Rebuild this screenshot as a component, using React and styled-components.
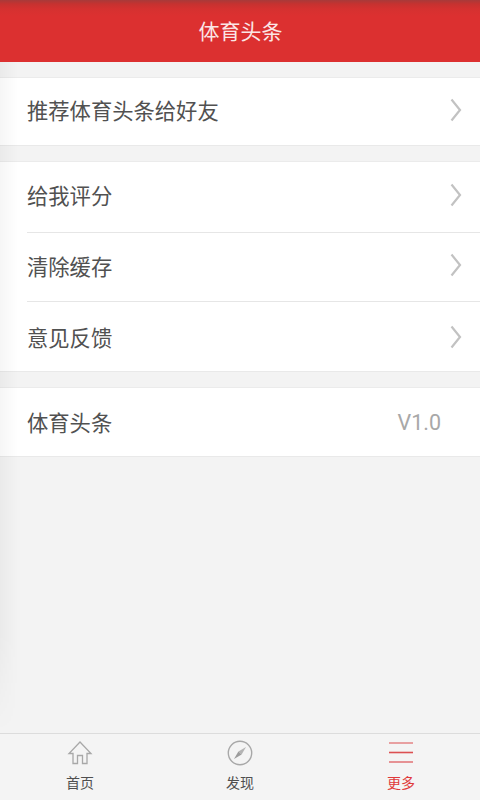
import React from "react";
import styled, { createGlobalStyle } from "styled-components";

const GlobalStyle = createGlobalStyle`
  html, body {
    margin: 0;
    padding: 0;
    background: #f3f3f3;
  }
  body {
    font-family: "Roboto", "Noto Sans CJK SC", sans-serif;
  }
`;

const Screen = styled.div`
  position: relative;
  width: 480px;
  height: 800px;
  display: flex;
  flex-direction: column;
  background: #f3f3f3;
  overflow: hidden;
`;

const SideShade = styled.div`
  position: absolute;
  left: 0;
  top: 62px;
  bottom: 67px;
  width: 18px;
  background: linear-gradient(to right, rgba(0, 0, 0, 0.035), rgba(0, 0, 0, 0));
  mask-image: linear-gradient(to bottom, #000 85%, transparent 100%);
  pointer-events: none;
`;

const Header = styled.header`
  height: 62px;
  flex: none;
  box-sizing: border-box;
  padding: 0 0 2px 1px;
  display: flex;
  align-items: center;
  justify-content: center;
  background: linear-gradient(to bottom, #a83a3a 0, #c63230 4px, #d53130 9px, #dc3030 16px);
  color: #fbe6e6;
  font-size: 21px;
  font-family: "Noto Sans CJK SC", sans-serif;
`;

const Content = styled.main`
  flex: 1;
  padding-top: 15px;
  display: flex;
  flex-direction: column;
  gap: 15px;
`;

const Group = styled.section`
  background: #fff;
  border-top: 1px solid #ebebeb;
  border-bottom: 1px solid #e9e9e9;
`;

const Row = styled.div`
  height: ${(p) => p.$height}px;
  margin-left: 27px;
  padding: 0 18px ${(p) => p.$lift ?? 4}px 0;
  display: flex;
  align-items: center;
  justify-content: space-between;
  box-sizing: border-box;
  border-top: ${(p) => (p.$divided ? "1px solid #e6e6e6" : "none")};
`;

const RowLabel = styled.span`
  font-family: "Noto Sans CJK SC", sans-serif;
  font-size: 21.3px;
  color: #515151;
`;

const Version = styled.span`
  font-family: "Roboto", sans-serif;
  font-size: 21.5px;
  color: #a8a8a8;
  padding: 2px 21px 0 0;
`;

const ChevronSvg = styled.svg`
  width: 12px;
  height: 24px;
  flex: none;
`;

const Footer = styled.nav`
  height: 67px;
  flex: none;
  box-sizing: border-box;
  border-top: 1px solid #dcdcdc;
  background: #f4f4f4;
  display: grid;
  grid-template-columns: repeat(3, 1fr);
`;

const Tab = styled.div`
  display: flex;
  flex-direction: column;
  align-items: center;
  padding-top: 6px;
  padding-left: ${(p) => (p.$active ? "2px" : "0")};
  color: ${(p) => (p.$active ? "#e0393a" : "#4f4f4f")};
`;

const TabIcon = styled.svg`
  width: 26px;
  height: 26px;
  display: block;
`;

const TabLabel = styled.span`
  font-family: "Noto Sans CJK SC", sans-serif;
  font-size: 14px;
  line-height: 20px;
  margin-top: 6px;
`;

function Chevron() {
  return (
    <ChevronSvg viewBox="0 0 12 24">
      <path d="M1.5 1.5 L10 12 L1.5 22.5" fill="none" stroke="#c2c2c2" strokeWidth="2.2" />
    </ChevronSvg>
  );
}

function HomeIcon() {
  return (
    <TabIcon viewBox="0 0 26 26" fill="none" stroke="#a8a8a8" strokeWidth="1.3">
      <path d="M13 2 L2 13.5 H6 V23.5 H10.5 V15.5 H15.5 V23.5 H20 V13.5 H24 Z" />
    </TabIcon>
  );
}

function CompassIcon() {
  return (
    <TabIcon viewBox="0 0 26 26" fill="none">
      <circle cx="13" cy="13" r="11.7" stroke="#a8a8a8" strokeWidth="1.4" />
      <path d="M19 7 L14.6 14.6 L11.4 11.4 Z" fill="#b4b4b4" />
      <path d="M7 19 L11.4 11.4 L14.6 14.6 Z" fill="#9c9c9c" />
    </TabIcon>
  );
}

function MenuIcon() {
  return (
    <TabIcon viewBox="0 0 26 26" fill="none" stroke="#e0686a">
      <path d="M1 3 H25" strokeWidth="1.2" />
      <path d="M1 12.5 H25" strokeWidth="1.6" stroke="#dc5052" />
      <path d="M1 22 H25" strokeWidth="1.4" />
    </TabIcon>
  );
}

export default function App() {
  return (
    <Screen>
      <GlobalStyle />
      <Header>体育头条</Header>
      <Content>
        <Group>
          <Row $height={67}>
            <RowLabel>推荐体育头条给好友</RowLabel>
            <Chevron />
          </Row>
        </Group>
        <Group>
          <Row $height={70} $lift={5}>
            <RowLabel>给我评分</RowLabel>
            <Chevron />
          </Row>
          <Row $divided $height={69}>
            <RowLabel>清除缓存</RowLabel>
            <Chevron />
          </Row>
          <Row $divided $height={70} $lift={0}>
            <RowLabel>意见反馈</RowLabel>
            <Chevron />
          </Row>
        </Group>
        <Group>
          <Row $height={68} $lift={2}>
            <RowLabel>体育头条</RowLabel>
            <Version>V1.0</Version>
          </Row>
        </Group>
      </Content>
      <Footer>
        <Tab>
          <HomeIcon />
          <TabLabel>首页</TabLabel>
        </Tab>
        <Tab>
          <CompassIcon />
          <TabLabel>发现</TabLabel>
        </Tab>
        <Tab $active>
          <MenuIcon />
          <TabLabel>更多</TabLabel>
        </Tab>
      </Footer>
      <SideShade />
    </Screen>
  );
}
